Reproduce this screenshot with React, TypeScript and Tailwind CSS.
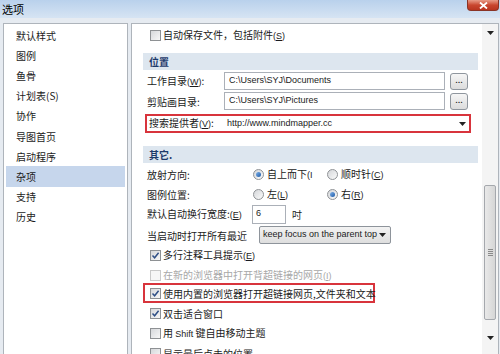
import { ReactNode } from "react";

const navItems = [
  "默认样式",
  "图例",
  "鱼骨",
  "计划表(S)",
  "协作",
  "导图首页",
  "启动程序",
  "杂项",
  "支持",
  "历史",
];

const Key = ({ k }: { k: string }) => (
  <span className="font-['Liberation_Sans',sans-serif] text-[9px]">
    (<span className="underline">{k}</span>)
  </span>
);

const Checkbox = ({
  checked,
  disabled,
}: {
  checked?: boolean;
  disabled?: boolean;
}) => (
  <span
    className={`flex h-[11px] w-[11px] shrink-0 items-center justify-center border ${
      disabled
        ? "border-[#c9c9c9] bg-[#f6f6f6]"
        : "border-[#8e9194] bg-gradient-to-br from-[#d6d8db] to-[#f7f7f7]"
    }`}
  >
    {checked && (
      <svg width="9" height="9" viewBox="0 0 9 9">
        <path
          d="M1.5 4.6 L3.6 6.8 L7.6 1.8"
          fill="none"
          stroke="#2f4f86"
          strokeWidth="1.5"
        />
      </svg>
    )}
  </span>
);

const Radio = ({ checked }: { checked?: boolean }) => (
  <span className="flex h-[11px] w-[11px] shrink-0 items-center justify-center rounded-full border border-[#8f9296] bg-gradient-to-br from-[#d4d6d9] to-[#fbfbfb]">
    {checked && (
      <span className="h-[5px] w-[5px] rounded-full bg-gradient-to-br from-[#7fb2ea] to-[#1c5aa6]" />
    )}
  </span>
);

const CheckRow = ({
  checked,
  disabled,
  children,
}: {
  checked?: boolean;
  disabled?: boolean;
  children: ReactNode;
}) => (
  <div className="flex h-[20px] items-center gap-[2px] pl-[7px]">
    <Checkbox checked={checked} disabled={disabled} />
    <span className={disabled ? "text-[#a8a8a8]" : ""}>{children}</span>
  </div>
);

const Section = ({ title, className }: { title: string; className: string }) => (
  <div
    className={`flex h-[17px] items-center bg-[#dde6ef] pl-[6px] font-bold text-[#1d3a6b] ${className}`}
  >
    {title}
  </div>
);

const PathRow = ({ label, value }: { label: ReactNode; value: string }) => (
  <div className="flex h-[20px] items-center pl-[4px]">
    <span className="w-[77px] shrink-0">{label}</span>
    <div className="flex h-[18px] w-[221px] items-center border border-[#abb0b8] bg-white pl-[4px] font-['Liberation_Sans',sans-serif] text-[9px]">
      {value}
    </div>
    <div className="ml-[5px] flex h-[17px] w-[18px] items-center justify-center rounded-[3px] border border-[#8f969e] bg-gradient-to-b from-[#f6f6f6] to-[#dcdcdc] pb-[3px] text-[9px] leading-none">
      ...
    </div>
  </div>
);

const Arrow = () => (
  <svg width="7" height="4" viewBox="0 0 7 4">
    <path d="M0 0 H7 L3.5 4 Z" fill="#222" />
  </svg>
);

export default function App() {
  return (
    <div className="flex h-[354px] w-[500px] flex-col overflow-hidden whitespace-nowrap bg-[#e6ebf1] font-['Noto_Sans_CJK_SC',sans-serif] text-[10px] text-[#1b1b1b]">
      <div className="flex h-[18px] shrink-0 items-start justify-between bg-gradient-to-b from-[#b9d1ec] to-[#d6e4f3]">
        <span className="pl-[2px] pt-[1px] text-[11px] text-black">选项</span>
        <div className="mr-[1px] flex h-[11px] w-[32px] items-center justify-center rounded-b-[4px] border border-t-0 border-[#8a3426] bg-gradient-to-b from-[#e79b87] via-[#c9472f] to-[#b8351f]">
          <svg width="9" height="7" viewBox="0 0 9 7">
            <path d="M1 0.5 L8 6.5 M8 0.5 L1 6.5" stroke="white" strokeWidth="1.8" />
          </svg>
        </div>
      </div>

      <div className="flex flex-1 gap-[3px] pl-[3px] pr-[1px] pt-[5px]">
        <div className="w-[125px] shrink-0 border border-b-0 border-[#aeb4bb] bg-white pt-[1px]">
          {navItems.map((item) => (
            <div
              key={item}
              className={`mx-[2px] flex h-[20.2px] items-center pl-[10px] ${
                item === "杂项" ? "bg-[#c6d6ec]" : ""
              }`}
            >
              {item}
            </div>
          ))}
        </div>

        <div className="flex flex-1 border border-b-0 border-[#aeb4bb] bg-white">
          <div className="flex-1 pl-[11px] pr-[4px] pt-[1px]">
            <CheckRow>
              自动保存文件，包括附件
              <Key k="S" />
            </CheckRow>

            <Section title="位置" className="mt-[8px]" />
            <div className="mt-[1px]">
              <PathRow
                label={
                  <>
                    工作目录
                    <Key k="W" />:
                  </>
                }
                value="C:\Users\SYJ\Documents"
              />
              <PathRow label="剪贴画目录:" value="C:\Users\SYJ\Pictures" />
            </div>

            <div className="ml-[2px] mt-[3px] flex h-[19px] w-[326px] items-center border-2 border-[#d8343c] pl-[2px]">
              <span className="w-[77px] shrink-0">
                搜索提供者
                <Key k="V" />:
              </span>
              <div className="flex h-full flex-1 items-center justify-between bg-white pl-[1px] pr-[3px] font-['Liberation_Sans',sans-serif] text-[9px]">
                http://www.mindmapper.cc
                <Arrow />
              </div>
            </div>

            <Section title="其它." className="mt-[13px]" />

            <div className="mt-[1px] flex h-[20px] items-center pl-[4px]">
              <span className="w-[106px] shrink-0">放射方向:</span>
              <div className="flex w-[74px] items-center gap-[3px]">
                <Radio checked />
                <span>
                  自上而下
                  <span className="font-['Liberation_Sans',sans-serif] text-[9px]">(I</span>
                </span>
              </div>
              <div className="flex items-center gap-[3px]">
                <Radio />
                <span>
                  顺时针
                  <Key k="C" />
                </span>
              </div>
            </div>
            <div className="flex h-[20px] items-center pl-[4px]">
              <span className="w-[106px] shrink-0">图例位置:</span>
              <div className="flex w-[74px] items-center gap-[3px]">
                <Radio />
                <span>
                  左
                  <Key k="L" />
                </span>
              </div>
              <div className="flex items-center gap-[3px]">
                <Radio checked />
                <span>
                  右
                  <Key k="R" />
                </span>
              </div>
            </div>
            <div className="flex h-[20px] items-center pl-[4px]">
              <span className="w-[105px] shrink-0">
                默认自动换行宽度:
                <Key k="E" />
              </span>
              <div className="flex h-[19px] w-[34px] items-center border border-[#abb0b8] bg-white pl-[3px] font-['Liberation_Sans',sans-serif] text-[9px]">
                6
              </div>
              <span className="ml-[6px]">吋</span>
            </div>
            <div className="mt-[1px] flex h-[20px] items-center pl-[4px]">
              <span className="w-[112px] shrink-0">当启动时打开所有最近</span>
              <div className="flex h-[18px] w-[132px] items-center justify-between rounded-[2px] border border-[#8e949b] bg-gradient-to-b from-[#f3f3f3] to-[#dedede] pl-[3px] pr-[4px] font-['Liberation_Sans',sans-serif] text-[9px]">
                keep focus on the parent top
                <Arrow />
              </div>
            </div>

            <CheckRow checked>
              多行注释工具提示
              <Key k="E" />
            </CheckRow>
            <div className="h-[18px]">
              <div className="flex h-[20px] items-center gap-[2px] pl-[7px]">
                <Checkbox disabled />
                <span className="text-[#a8a8a8]">
                  在新的浏览器中打开背超链接的网页
                  <Key k="I" />
                </span>
              </div>
            </div>
            <div className="flex h-[20px] w-[232px] items-center gap-[2px] border-2 border-[#d8343c] pl-[5px]">
              <Checkbox checked />
              <span>使用内置的浏览器打开超链接网页,文件夹和文本</span>
            </div>
            <CheckRow checked>双击适合窗口</CheckRow>
            <CheckRow>
              用 <span className="font-['Liberation_Sans',sans-serif] text-[9px]">Shift</span> 键自由移动主题
            </CheckRow>
            <CheckRow>显示最后点击的位置</CheckRow>
          </div>

          <div className="flex w-[16px] shrink-0 flex-col items-center bg-[#f4f4f4] pt-[7px]">
            <Arrow />
            <div className="mt-[150px] flex h-[135px] w-[12px] flex-col items-center justify-center gap-[1px] rounded-[2px] border border-[#a5a8ad] bg-gradient-to-r from-[#e9e9e9] to-[#d6d6d6]">
              <span className="h-px w-[5px] bg-[#8a8a8a]" />
              <span className="h-px w-[5px] bg-[#8a8a8a]" />
              <span className="h-px w-[5px] bg-[#8a8a8a]" />
              <span className="h-px w-[5px] bg-[#8a8a8a]" />
            </div>
            <div className="mt-[16px]">
              <Arrow />
            </div>
          </div>
        </div>
      </div>
    </div>
  );
}
